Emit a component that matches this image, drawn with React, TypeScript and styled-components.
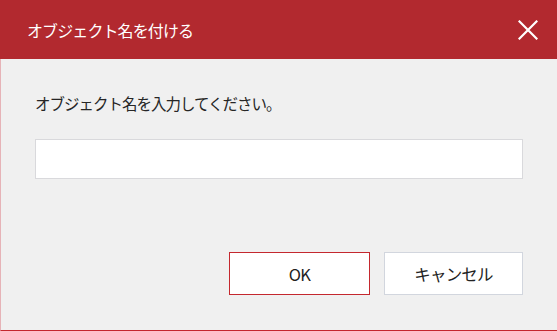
import React from "react";
import styled, { createGlobalStyle } from "styled-components";

const GlobalStyle = createGlobalStyle`
  html, body {
    margin: 0;
    padding: 0;
    background: #f0f0f0;
  }
  body {
    font-family: "Noto Sans CJK JP", "Noto Sans", sans-serif;
  }
`;

const Dialog = styled.div`
  width: 557px;
  height: 331px;
  display: flex;
  flex-direction: column;
  background: #f0f0f0;
  overflow: hidden;
`;

const TitleBar = styled.div`
  height: 59px;
  flex-shrink: 0;
  display: flex;
  align-items: center;
  justify-content: space-between;
  background: #b2292f;
  padding: 0 17px 0 27px;
  box-sizing: border-box;
`;

const Title = styled.div`
  color: #ffffff;
  font-size: 16px;
  letter-spacing: -0.9px;
  line-height: 20px;
  padding-top: 1px;
`;

const CloseButton = styled.button`
  width: 24px;
  height: 24px;
  padding: 0;
  border: none;
  background: transparent;
  display: flex;
  align-items: center;
  justify-content: center;
  cursor: pointer;
`;

const Body = styled.div`
  flex: 1;
  display: flex;
  flex-direction: column;
  border-left: 1px solid #e6b3b7;
  border-bottom: 1px solid #c4262d;
  padding: 34px 34px 0 34px;
`;

const Label = styled.div`
  color: #262626;
  font-size: 15.5px;
  letter-spacing: -1px;
  line-height: 20px;
  height: 20px;
`;

const NameInput = styled.input`
  margin-top: 26px;
  height: 40px;
  width: 488px;
  box-sizing: border-box;
  border: 1px solid #d9d9dc;
  background: #ffffff;
  outline: none;
  font-family: inherit;
  font-size: 14px;
  padding: 0 8px;
`;

const Actions = styled.div`
  display: flex;
  justify-content: flex-end;
  gap: 14px;
  margin-top: 73px;
`;

const ActionButton = styled.button<{ $primary?: boolean }>`
  width: ${(p) => (p.$primary ? "141px" : "139px")};
  height: 43px;
  box-sizing: border-box;
  background: #ffffff;
  border: 1px solid ${(p) => (p.$primary ? "#c4282e" : "#d2d6de")};
  color: #222222;
  font-family: "Noto Sans CJK JP", "Noto Sans", sans-serif;
  font-size: 16.5px;
  letter-spacing: -0.8px;
  line-height: 20px;
  padding: 0;
  cursor: pointer;
`;

export default function App() {
  return (
    <>
      <GlobalStyle />
      <Dialog>
        <TitleBar>
          <Title>オブジェクト名を付ける</Title>
          <CloseButton aria-label="閉じる">
            <svg width="20" height="20" viewBox="0 0 20 20">
              <path
                d="M1.5 1.5 L18.5 18.5 M18.5 1.5 L1.5 18.5"
                stroke="#ffffff"
                strokeWidth="2.2"
                strokeLinecap="square"
              />
            </svg>
          </CloseButton>
        </TitleBar>
        <Body>
          <Label>オブジェクト名を入力してください。</Label>
          <NameInput type="text" />
          <Actions>
            <ActionButton $primary>OK</ActionButton>
            <ActionButton>キャンセル</ActionButton>
          </Actions>
        </Body>
      </Dialog>
    </>
  );
}
